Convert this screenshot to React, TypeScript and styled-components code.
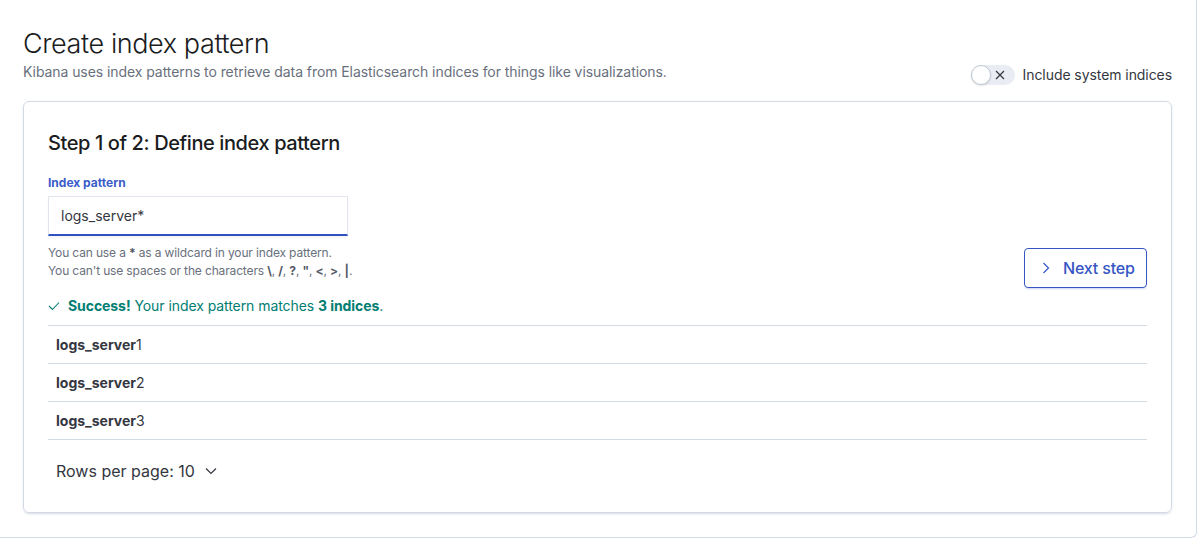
import styled, { createGlobalStyle } from "styled-components";

const GlobalStyle = createGlobalStyle`
    html, body {
        margin: 0;
        padding: 0;
        background: #ffffff;
        overflow: hidden;
    }

    body {
        font-family: Inter, "Noto Sans", sans-serif;
        color: #343741;
        -webkit-font-smoothing: antialiased;
    }

    * {
        box-sizing: border-box;
    }
`

const Page = styled.div`
    width: 1198px;
    height: 538px;
    padding: 0 1px 1px 0;
`

const OuterPanel = styled.main`
    border-right: 1px solid #d3dae6;
    border-bottom: 1px solid #d3dae6;
    border-bottom-right-radius: 6px;
    padding: 26px 24px 24px 23px;
`

const Header = styled.header`
    display: flex;
    align-items: flex-end;
    justify-content: space-between;
`

const Title = styled.h1`
    margin: 0;
    font-size: 27px;
    line-height: 36px;
    font-weight: 300;
    letter-spacing: -0.015em;
    color: #1a1c21;
`

const Subtitle = styled.p`
    margin: 0;
    font-size: 14px;
    line-height: 20px;
    letter-spacing: -0.005em;
    color: #69707d;
`

const SwitchWrap = styled.label`
    display: flex;
    align-items: center;
    gap: 8px;
    margin-bottom: -3px;
    font-size: 14px;
    line-height: 20px;
    letter-spacing: -0.005em;
    color: #343741;
    cursor: pointer;
`

const Track = styled.span`
    position: relative;
    display: inline-flex;
    align-items: center;
    justify-content: flex-end;
    width: 44px;
    height: 20px;
    padding-right: 10px;
    border-radius: 10px;
    background: #e9edf3;
`

const Knob = styled.span`
    position: absolute;
    left: 0;
    top: 0;
    width: 20px;
    height: 20px;
    border-radius: 50%;
    background: #ffffff;
    border: 1px solid #c2c8d2;
    box-shadow: 0 1px 2px rgba(0, 0, 0, 0.12);
`

const Card = styled.section`
    margin-top: 19px;
    padding: 24px;
    border: 1px solid #d3dae6;
    border-radius: 6px;
    box-shadow: 0 2px 2px -1px rgba(152, 162, 179, 0.3), 0 1px 5px -2px rgba(152, 162, 179, 0.3);
`

const StepTitle = styled.h2`
    margin: 5px 0 0;
    font-size: 20px;
    line-height: 24px;
    font-weight: 500;
    letter-spacing: -0.02em;
    color: #1a1c21;
`

const FormRow = styled.div`
    display: flex;
    align-items: flex-end;
    justify-content: space-between;
    margin-top: 20px;
`

const Field = styled.div`
    display: flex;
    flex-direction: column;
`

const Label = styled.label`
    font-size: 12px;
    line-height: 16px;
    font-weight: 700;
    color: #3b5cc9;
    margin-bottom: 5px;
`

const Input = styled.input`
    width: 300px;
    height: 40px;
    padding: 0 12px;
    font-family: inherit;
    font-size: 14px;
    color: #343741;
    background: #ffffff;
    border: 1px solid #e1e5ec;
    border-bottom: 2px solid #3052c1;
    box-shadow: 0 2px 3px -1px rgba(0, 0, 0, 0.08);
    outline: none;
`

const Help = styled.div`
    margin-top: 8px;
    font-size: 12px;
    line-height: 18px;
    letter-spacing: -0.012em;
    color: #69707d;

    b {
        font-weight: 700;
        color: #535966;
    }
`

const NextButton = styled.button`
    display: inline-flex;
    align-items: center;
    justify-content: flex-start;
    gap: 13px;
    width: 123px;
    height: 40px;
    margin-bottom: -8px;
    padding: 0 0 0 17px;
    font-family: inherit;
    font-size: 16px;
    font-weight: 500;
    letter-spacing: -0.01em;
    color: #3656c4;
    background: #ffffff;
    border: 1px solid #3656c4;
    border-radius: 4px;
    box-shadow: 0 2px 2px -1px rgba(54, 86, 196, 0.25);
    cursor: pointer;
`

const Success = styled.div`
    display: flex;
    align-items: center;
    gap: 8px;
    margin-top: 16px;
    font-size: 14px;
    line-height: 20px;
    letter-spacing: -0.005em;
    color: #017d73;

    b {
        font-weight: 700;
    }
`

const Table = styled.div`
    margin-top: 9px;
    border-bottom: 1px solid #d3dae6;
`

const Row = styled.div`
    height: 38px;
    display: flex;
    align-items: center;
    padding: 0 8px;
    border-top: 1px solid #d3dae6;
    font-size: 14px;
    line-height: 20px;
    color: #343741;

    b {
        font-weight: 700;
    }
`

const Footer = styled.div`
    display: flex;
    align-items: center;
    gap: 10px;
    padding: 19px 0 5px 8px;
    font-size: 16px;
    line-height: 24px;
    color: #343741;
`

function CrossIcon() {
    return (
        <svg width="10" height="10" viewBox="0 0 10 10">
            <path d="M1 1 L9 9 M9 1 L1 9" stroke="#343741" strokeWidth="1.2" fill="none" />
        </svg>
    )
}

function CheckIcon() {
    return (
        <svg width="12" height="10" viewBox="0 0 12 10">
            <path d="M1 5 L4.5 8.5 L11 1.5" stroke="#017d73" strokeWidth="1.1" fill="none" />
        </svg>
    )
}

function ChevronRight() {
    return (
        <svg width="8" height="12" viewBox="0 0 8 12">
            <path d="M1.5 1 L6.5 6 L1.5 11" stroke="#3656c4" strokeWidth="1.2" fill="none" />
        </svg>
    )
}

function ChevronDown() {
    return (
        <svg width="12" height="8" viewBox="0 0 12 8">
            <path d="M1 1.5 L6 6.5 L11 1.5" stroke="#343741" strokeWidth="1.2" fill="none" />
        </svg>
    )
}

const indices = ["1", "2", "3"]

export default function App() {
    return (
        <>
            <GlobalStyle />
            <Page>
                <OuterPanel>
                    <Header>
                        <div>
                            <Title>Create index pattern</Title>
                            <Subtitle>
                                Kibana uses index patterns to retrieve data from Elasticsearch indices for things like visualizations.
                            </Subtitle>
                        </div>
                        <SwitchWrap>
                            <Track>
                                <Knob />
                                <CrossIcon />
                            </Track>
                            Include system indices
                        </SwitchWrap>
                    </Header>

                    <Card>
                        <StepTitle>Step 1 of 2: Define index pattern</StepTitle>

                        <FormRow>
                            <Field>
                                <Label>Index pattern</Label>
                                <Input defaultValue="logs_server*" />
                                <Help>
                                    You can use a <b>*</b> as a wildcard in your index pattern.
                                    <br />
                                    You can't use spaces or the characters <b>\</b>, <b>/</b>, <b>?</b>, <b>"</b>, <b>&lt;</b>, <b>&gt;</b>, <b>|</b>.
                                </Help>
                            </Field>
                            <NextButton>
                                <ChevronRight />
                                Next step
                            </NextButton>
                        </FormRow>

                        <Success>
                            <CheckIcon />
                            <span>
                                <b>Success!</b> Your index pattern matches <b>3 indices</b>.
                            </span>
                        </Success>

                        <Table>
                            {indices.map(n => (
                                <Row key={n}>
                                    <span><b>logs_server</b>{n}</span>
                                </Row>
                            ))}
                        </Table>

                        <Footer>
                            Rows per page: 10
                            <ChevronDown />
                        </Footer>
                    </Card>
                </OuterPanel>
            </Page>
        </>
    )
}
